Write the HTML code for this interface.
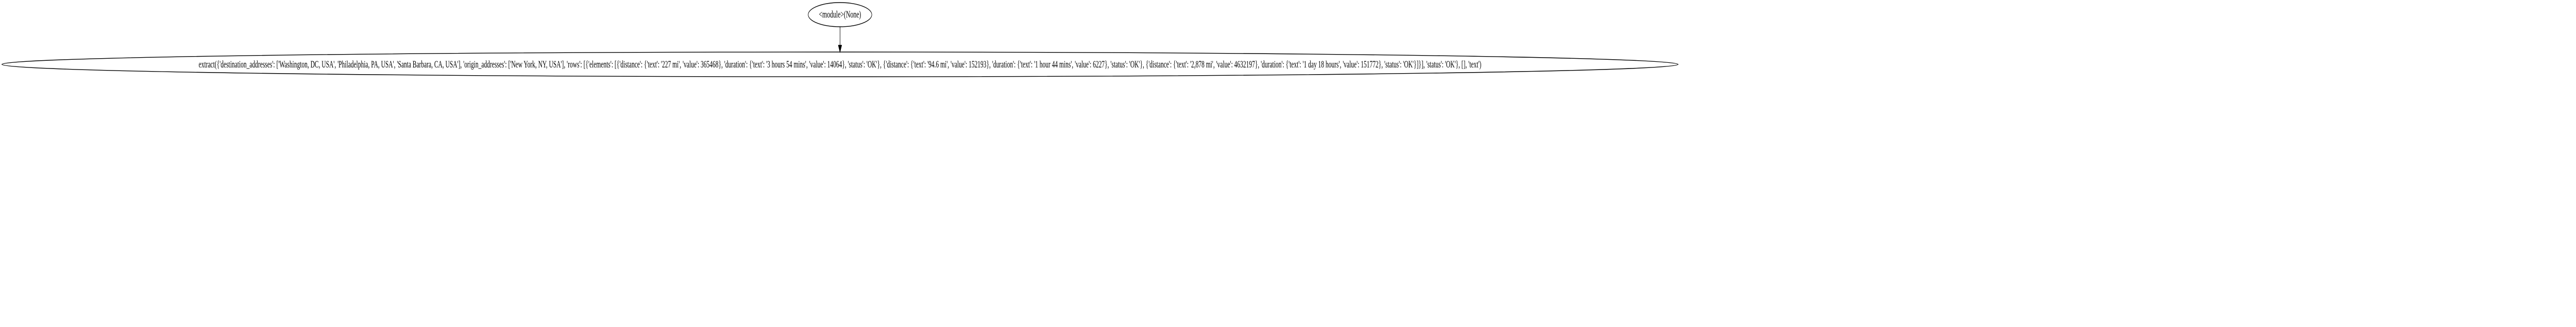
<!DOCTYPE html>
<html><head><meta charset="utf-8"><style>
html,body{margin:0;padding:0;background:#fff;width:100%;height:100%;overflow:hidden}
svg{display:block;width:100vw;height:100vh}
text{font-family:"Liberation Serif","Times New Roman",serif;font-size:18.67px;fill:#000}
</style></head><body>
<svg viewBox="0 0 7935 635" preserveAspectRatio="none" xmlns="http://www.w3.org/2000/svg">
<rect width="7935" height="635" fill="#fff"/>
<ellipse cx="2587.5" cy="28.5" rx="98" ry="23.5" fill="none" stroke="#000" stroke-width="1.4"/>
<text x="2587.5" y="34" text-anchor="middle">&lt;module&gt;(None)</text>
<line x1="2587.5" y1="52" x2="2587.5" y2="88" stroke="#000" stroke-width="1.4"/>
<polygon points="2582.5,88 2592.5,88 2587.5,101" fill="#000" stroke="#000" stroke-width="1.4"/>
<ellipse cx="2587.5" cy="125" rx="2582" ry="24" fill="none" stroke="#000" stroke-width="1.4"/>
<text x="2587.5" y="131" text-anchor="middle" textLength="3951" lengthAdjust="spacingAndGlyphs">extract({'destination_addresses': ['Washington, DC, USA', 'Philadelphia, PA, USA', 'Santa Barbara, CA, USA'], 'origin_addresses': ['New York, NY, USA'], 'rows': [{'elements': [{'distance': {'text': '227 mi', 'value': 365468}, 'duration': {'text': '3 hours 54 mins', 'value': 14064}, 'status': 'OK'}, {'distance': {'text': '94.6 mi', 'value': 152193}, 'duration': {'text': '1 hour 44 mins', 'value': 6227}, 'status': 'OK'}, {'distance': {'text': '2,878 mi', 'value': 4632197}, 'duration': {'text': '1 day 18 hours', 'value': 151772}, 'status': 'OK'}]}], 'status': 'OK'}, [], 'text')</text>
</svg>
</body></html>
